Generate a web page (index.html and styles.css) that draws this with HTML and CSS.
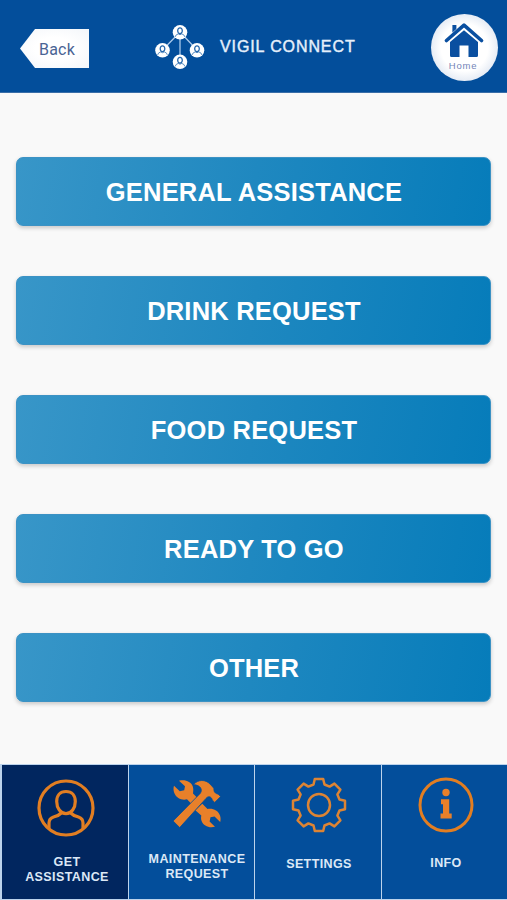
FILE: index.html
```html
<!DOCTYPE html>
<html lang="en">
<head>
    <meta charset="UTF-8">
    <meta name="viewport" content="width=device-width, initial-scale=1.0">
    <title>Vigil Connect</title>
    <link rel="stylesheet" href="styles.css">
</head>
<body>
    <!-- Header -->
    <header class="header">
        <a href="#" class="back"><span>Back</span></a>
        <div class="brand">
            <svg class="logo" width="52" height="48" viewBox="0 0 52 48">
                <defs>
                    <g id="person">
                        <circle r="7.3" fill="#fff"/>
                        <path d="M-4.8 4.6 Q-4.6 2.4 -1.8 1.6 Q0 3.2 1.8 1.6 Q4.6 2.4 4.8 4.6" fill="none" stroke="#5b8fc4" stroke-width="1"/>
                        <ellipse cy="-1.6" rx="2.3" ry="2.9" fill="none" stroke="#2466ab" stroke-width="1.3"/>
                    </g>
                </defs>
                <path d="M26 9 L8.5 27 M26 9 L43 27 M26 9 V39" stroke="#a9c8ea" stroke-width="1.3"/>
                <use href="#person" x="26" y="9.3"/>
                <use href="#person" x="8.5" y="27.3"/>
                <use href="#person" x="43" y="27.3"/>
                <use href="#person" x="26" y="38.8"/>
            </svg>
            <h1 class="title">VIGIL CONNECT</h1>
        </div>
        <a href="#" class="home">
            <svg width="40" height="36" viewBox="0 0 40 36">
                <path d="M8.4 10.5 V3 H12.4 V7" fill="#0a4fa0"/>
                <path d="M2.5 18.5 L20 3.2 L37.5 18.5" fill="none" stroke="#0a4fa0" stroke-width="3.6" stroke-linecap="round" stroke-linejoin="round"/>
                <path d="M6 20 L20 8.3 L34 20 V33.5 Q34 35 32.5 35 H24.5 V23.5 H15.5 V35 H7.5 Q6 35 6 33.5 Z" fill="#0a4fa0"/>
            </svg>
            <span>Home</span>
        </a>
    </header>

    <!-- Request types -->
    <main class="requests">
        <button type="button" class="button">GENERAL ASSISTANCE</button>
        <button type="button" class="button">DRINK REQUEST</button>
        <button type="button" class="button">FOOD REQUEST</button>
        <button type="button" class="button">READY TO GO</button>
        <button type="button" class="button">OTHER</button>
    </main>

    <!-- Bottom tabs -->
    <nav class="tabs">
        <a href="#" class="tab tab-assist active">
            <svg width="58" height="58" viewBox="-29 -29 58 58" fill="none" stroke="#e27e22" stroke-width="3.2">
                <circle r="27"/>
                <path d="M0 -16.5 C6 -16.5 9.3 -12.5 9.3 -6.5 C9.3 0 5.5 5.6 0 5.6 C-5.5 5.6 -9.3 0 -9.3 -6.5 C-9.3 -12.5 -6 -16.5 0 -16.5 Z"/>
                <path d="M-17 20.5 V15 Q-17 10.5 -12.5 9 Q-7 7.5 -4 4.5 M17 20.5 V15 Q17 10.5 12.5 9 Q7 7.5 4 4.5"/>
            </svg>
            <span>GET<br>ASSISTANCE</span>
        </a>
        <a href="#" class="tab tab-maintenance">
            <svg width="48" height="48" viewBox="0 0 48 48" fill="#e8802a">
                <path d="M6 .8 C12 -.8 18 1.5 19.8 6.5 C20.6 9 20.2 11.5 20 13.5 L25.5 19 L19.5 25 L14 19.3 C9 20.5 3.5 18.5 1.3 13 C.3 10.5 .3 8 1 5.8 L6.8 11.2 L11.2 10.2 L12 6.2 Z"/>
                <path d="M22.3 30.3 L29.3 23.8 L34.5 29 C39.5 28 45 30 47 35.5 C47.8 38 47.7 40 47.2 42 L41.5 36.5 L37.5 37.3 L36.6 41.5 L42 46.8 C36 48.3 30.5 46 28.6 41 C27.8 39 28 37 28.3 35.5 Z"/>
                <path d="M20.5 4.6 C25 -.8 32.5 -.7 37 4 L40.8 8.2 C41 10.5 41 11.8 42.2 12.8 C43.5 13.8 44.5 14 45.2 14.2 L47.6 16.6 L41.7 22.4 L39.2 20 C39 18.5 38.2 17.2 36.6 16.8 C35 16.4 34 17.4 33 18.4 L6.7 47.6 L.1 41 L27.2 13.4 C29.8 10 28 5.2 20.5 4.6 Z" stroke="#034e9b" stroke-width=".8"/>
            </svg>
            <span>MAINTENANCE<br>REQUEST</span>
        </a>
        <a href="#" class="tab tab-settings">
            <svg width="58" height="58" viewBox="-29 -29 58 58" fill="none" stroke="#dd8434" stroke-width="2.5" stroke-linejoin="round">
                <circle r="11"/>
                <path d="M-4.2 -26 H4.2 L5.5 -20.5 L10.6 -18.4 L15.4 -21.4 L21.4 -15.4 L18.4 -10.6 L20.5 -5.5 L26 -4.2 V4.2 L20.5 5.5 L18.4 10.6 L21.4 15.4 L15.4 21.4 L10.6 18.4 L5.5 20.5 L4.2 26 H-4.2 L-5.5 20.5 L-10.6 18.4 L-15.4 21.4 L-21.4 15.4 L-18.4 10.6 L-20.5 5.5 L-26 4.2 V-4.2 L-20.5 -5.5 L-18.4 -10.6 L-21.4 -15.4 L-15.4 -21.4 L-10.6 -18.4 L-5.5 -20.5 Z"/>
            </svg>
            <span>SETTINGS</span>
        </a>
        <a href="#" class="tab tab-info">
            <svg width="58" height="58" viewBox="-29 -29 58 58">
                <circle r="26" fill="none" stroke="#e27e22" stroke-width="3"/>
                <circle cx="0" cy="-12.5" r="3.7" fill="#e8802a"/>
                <path d="M-5 -5.8 H3.2 V8.6 H5.7 V13.6 H-5.5 V8.6 H-3 V-.8 H-5 Z" fill="#e8802a"/>
            </svg>
            <span>INFO</span>
        </a>
    </nav>
</body>
</html>
```

FILE: styles.css
```css
* {
    box-sizing: border-box;
}
body {
    margin: 0;
    width: 507px;
    height: 900px;
    display: flex;
    flex-direction: column;
    font-family: "Liberation Sans", Arial, sans-serif;
    background-color: #f9f9f9;
}
a {
    color: inherit;
    text-decoration: none;
}
svg {
    display: block;
    flex: none;
}

/* Header */
.header {
    height: 93px;
    padding: 0 9px 0 20px;
    display: flex;
    align-items: flex-start;
    background-color: #034e9b;
    border-bottom: 1px solid #3a6ea8;
}
.back {
    width: 69px;
    height: 39px;
    margin-top: 29px;
    padding: 1px 0 0 19px;
    display: flex;
    align-items: center;
    font-family: Roboto, sans-serif;
    font-size: 16px;
    letter-spacing: 0.2px;
    color: #4a6494;
    background: radial-gradient(#ffffff 40%, #f3f6fa 100%);
    clip-path: polygon(0 50%, 15px 0, 100% 0, 100% 100%, 15px 100%);
}
.brand {
    display: flex;
    align-items: center;
    gap: 14px;
    margin: 23px auto 0 65px;
}
.title {
    margin: 0;
    font-size: 16px;
    font-weight: normal;
    line-height: 48px;
    letter-spacing: 0.9px;
    color: #e6f0fb;
    -webkit-text-stroke: 0.4px #e6f0fb;
}
.home {
    width: 67px;
    height: 67px;
    margin-top: 14px;
    padding: 8px 2px 0 0;
    display: flex;
    flex-direction: column;
    align-items: center;
    border-radius: 50%;
    background: radial-gradient(closest-side, #ffffff 70%, #e6ecf5 100%);
}
.home span {
    margin-top: 2px;
    padding-right: 1px;
    font-size: 9.5px;
    line-height: 12px;
    letter-spacing: 0.8px;
    color: #7385b8;
}

/* Request buttons */
.requests {
    flex: 1;
    padding: 64px 16px 0;
    display: flex;
    flex-direction: column;
    gap: 50px;
}
.button {
    height: 69px;
    padding: 1px 0 0 1px;
    font-family: inherit;
    font-size: 25.5px;
    font-weight: bold;
    letter-spacing: 0.2px;
    color: white;
    background: linear-gradient(100deg, #3896c8 0%, #1f88c0 50%, #067cba 100%);
    border: 1px solid #3c92c4;
    border-radius: 7px;
    box-shadow: 0 2px 4px rgba(0, 0, 0, 0.2);
    cursor: pointer;
}

/* Bottom tabs */
.tabs {
    height: 136px;
    padding: 1px 0 1px 2px;
    display: grid;
    grid-template-columns: 126px 125px 126px 125px;
    gap: 1px;
    background-color: #bcd3ec;
}
.tab {
    display: flex;
    flex-direction: column;
    align-items: center;
    font-size: 12.5px;
    font-weight: bold;
    line-height: 15px;
    letter-spacing: 0.4px;
    text-align: center;
    color: #dce8f6;
    background-color: #034e9b;
}
.tab.active {
    background-color: #01265f;
}
.tab-assist {
    padding: 14px 0 0 2px;
}
.tab-assist span {
    margin-top: 18px;
    padding-left: 2px;
}
.tab-maintenance {
    padding-top: 15px;
    padding-left: 11px;
}
.tab-maintenance span {
    margin-top: 24px;
}
.tab-settings {
    padding: 11px 0 0 2px;
}
.tab-settings span {
    margin-top: 23px;
}
.tab-info {
    padding: 11px 0 0 3px;
}
.tab-info span {
    margin-top: 22px;
}
```
